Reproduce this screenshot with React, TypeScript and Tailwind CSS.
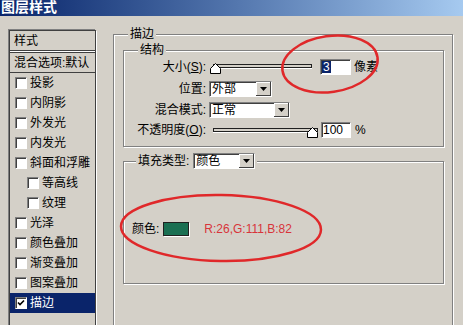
import React from 'react';

const sunken =
  'border border-t-[#808080] border-l-[#808080] border-r-white border-b-white shadow-[inset_1px_1px_0_#404040]';
const etched = 'border border-[#808080] shadow-[1px_1px_0_#fff,inset_1px_1px_0_#fff]';

function Check({ checked }: { checked?: boolean }) {
  return (
    <span className={`flex items-center justify-center w-[12px] h-[12px] bg-white ${sunken}`}>
      {checked && (
        <svg width="8" height="8" viewBox="0 0 8 8">
          <path d="M1 3.5 L3 5.5 L7 1.5" stroke="#000" strokeWidth="1.6" fill="none" />
        </svg>
      )}
    </span>
  );
}

const items = [
  { label: '投影' },
  { label: '内阴影' },
  { label: '外发光' },
  { label: '内发光' },
  { label: '斜面和浮雕' },
  { label: '等高线', indent: true },
  { label: '纹理', indent: true },
  { label: '光泽' },
  { label: '颜色叠加' },
  { label: '渐变叠加' },
  { label: '图案叠加' },
  { label: '描边', selected: true },
];

function StyleList() {
  return (
    <div className="mt-[14px] w-[87px] h-[300px] border border-[#404040] shadow-[-1px_-1px_0_#808080,1px_1px_0_#fff]">
      <div className="h-[19px] pl-[4px] flex items-center">样式</div>
      <div className="h-px bg-[#404040]" />
      <div className="h-px bg-white" />
      <div className="h-px bg-[#404040]" />
      <div className="h-[19px] pl-[4px] flex items-center whitespace-nowrap">混合选项:默认</div>
      <div className="h-px bg-[#404040]" />
      {items.map((it) => (
        <div
          key={it.label}
          className={`h-[20px] flex items-center gap-[3px] ${it.indent ? 'pl-[17px]' : 'pl-[5px]'} ${
            it.selected ? 'bg-[#0a246a] text-white' : ''
          }`}
        >
          <Check checked={it.selected} />
          <span>{it.label}</span>
        </div>
      ))}
    </div>
  );
}

function Select({ value, className }: { value: string; className: string }) {
  return (
    <div className={`flex h-[16px] bg-white ${sunken} ${className}`}>
      <span className="flex-1 pl-[2px] leading-[14px] text-black">{value}</span>
      <span className="w-[15px] h-[14px] bg-[#d4d0c8] flex items-center justify-center shadow-[inset_-1px_-1px_0_#404040,inset_1px_1px_0_#fff]">
        <svg width="7" height="4" viewBox="0 0 7 4">
          <path d="M0 0 H7 L3.5 4 Z" fill="#000" />
        </svg>
      </span>
    </div>
  );
}

function Slider({ className, thumb }: { className: string; thumb: string }) {
  return (
    <div className={`relative h-[16px] ${className}`}>
      <div className="h-[4px] border border-[#202020] bg-[#d4d0c8] shadow-[0_1px_0_#fff]" />
      <svg className={`absolute ${thumb}`} width="11" height="11" viewBox="0 0 11 11">
        <path d="M5.5 0.5 L10.5 5.5 V10.5 H0.5 V5.5 Z" fill="#fff" stroke="#000" />
      </svg>
    </div>
  );
}

function Label({ children }: { children: React.ReactNode }) {
  return <span className="w-[82px] text-right whitespace-nowrap">{children}</span>;
}

export default function App() {
  return (
    <div className="relative w-[463px] h-[325px] overflow-hidden bg-[#d4d0c8] text-[12px] leading-[16px] text-black font-['Liberation_Sans','Noto_Sans_CJK_SC',sans-serif]">
      <div className="h-[16px] bg-linear-to-r from-[#0a246a] to-[#a6caf0] pl-[1px] text-white font-bold text-[14px] leading-[14px]">
        图层样式
      </div>
      <div className="flex items-start pl-[9px]">
        <StyleList />
        <fieldset className={`ml-[17px] mt-[10px] w-[340px] h-[310px] ${etched}`}>
          <legend className="ml-[14px] px-[2px] h-[16px] bg-[#d4d0c8]">描边</legend>

          <fieldset className={`ml-[9px] w-[321px] pb-[8px] ${etched}`}>
            <legend className="ml-[14px] px-[2px] h-[16px] bg-[#d4d0c8]">结构</legend>
            <div className="mt-[1px] h-[16px] flex items-center">
              <Label>
                大小(<u>S</u>):
              </Label>
              <Slider className="ml-[7px] w-[99px] pt-[5px]" thumb="left-[-3px] top-[4px]" />
              <div className={`ml-[8px] w-[31px] h-[16px] bg-white ${sunken} flex items-center pl-[1px]`}>
                <span className="bg-[#0a246a] text-white px-[1px] leading-[12px]">3</span>
              </div>
              <span className="ml-[3px]">像素</span>
            </div>
            <div className="mt-[6px] h-[16px] flex items-center">
              <Label>位置:</Label>
              <Select value="外部" className="ml-[3px] w-[63px]" />
            </div>
            <div className="mt-[5px] h-[16px] flex items-center">
              <Label>混合模式:</Label>
              <Select value="正常" className="ml-[3px] w-[81px]" />
            </div>
            <div className="mt-[4px] h-[16px] flex items-center">
              <Label>
                不透明度(<u>O</u>):
              </Label>
              <Slider className="ml-[7px] w-[105px] pt-[6px]" thumb="right-0 top-[5px]" />
              <div className={`ml-[3px] w-[30px] h-[16px] bg-white ${sunken} flex items-center pl-[1px] leading-[12px]`}>
                100
              </div>
              <span className="ml-[4px]">%</span>
            </div>
          </fieldset>

          <fieldset className={`ml-[9px] mt-[6px] w-[321px] ${etched}`}>
            <legend className="ml-[12px] px-[2px] h-[16px] bg-[#d4d0c8]">
              <span className="inline-flex items-center">
                填充类型:
                <Select value="颜色" className="ml-[4px] w-[62px]" />
              </span>
            </legend>
            <div className="h-[114px] pt-[53px] pl-[8px] flex items-start">
              <span className="h-[14px] flex items-center">颜色:</span>
              <span className="ml-[4px] w-[26px] h-[14px] bg-[#1a6f52] border border-[#202020] shadow-[1px_1px_0_#fff]" />
              <span className="ml-[15px] h-[14px] flex items-center text-[#d8343a]">R:26,G:111,B:82</span>
            </div>
          </fieldset>
        </fieldset>
      </div>

      <svg className="absolute inset-0 pointer-events-none" width="463" height="325" viewBox="0 0 463 325">
        <ellipse cx="330" cy="64" rx="48" ry="28" transform="rotate(-8 330 64)" fill="none" stroke="#e0282a" strokeWidth="2.5" />
        <ellipse cx="221" cy="228" rx="100" ry="33" transform="rotate(1 221 228)" fill="none" stroke="#e0282a" strokeWidth="2.5" />
      </svg>
    </div>
  );
}
